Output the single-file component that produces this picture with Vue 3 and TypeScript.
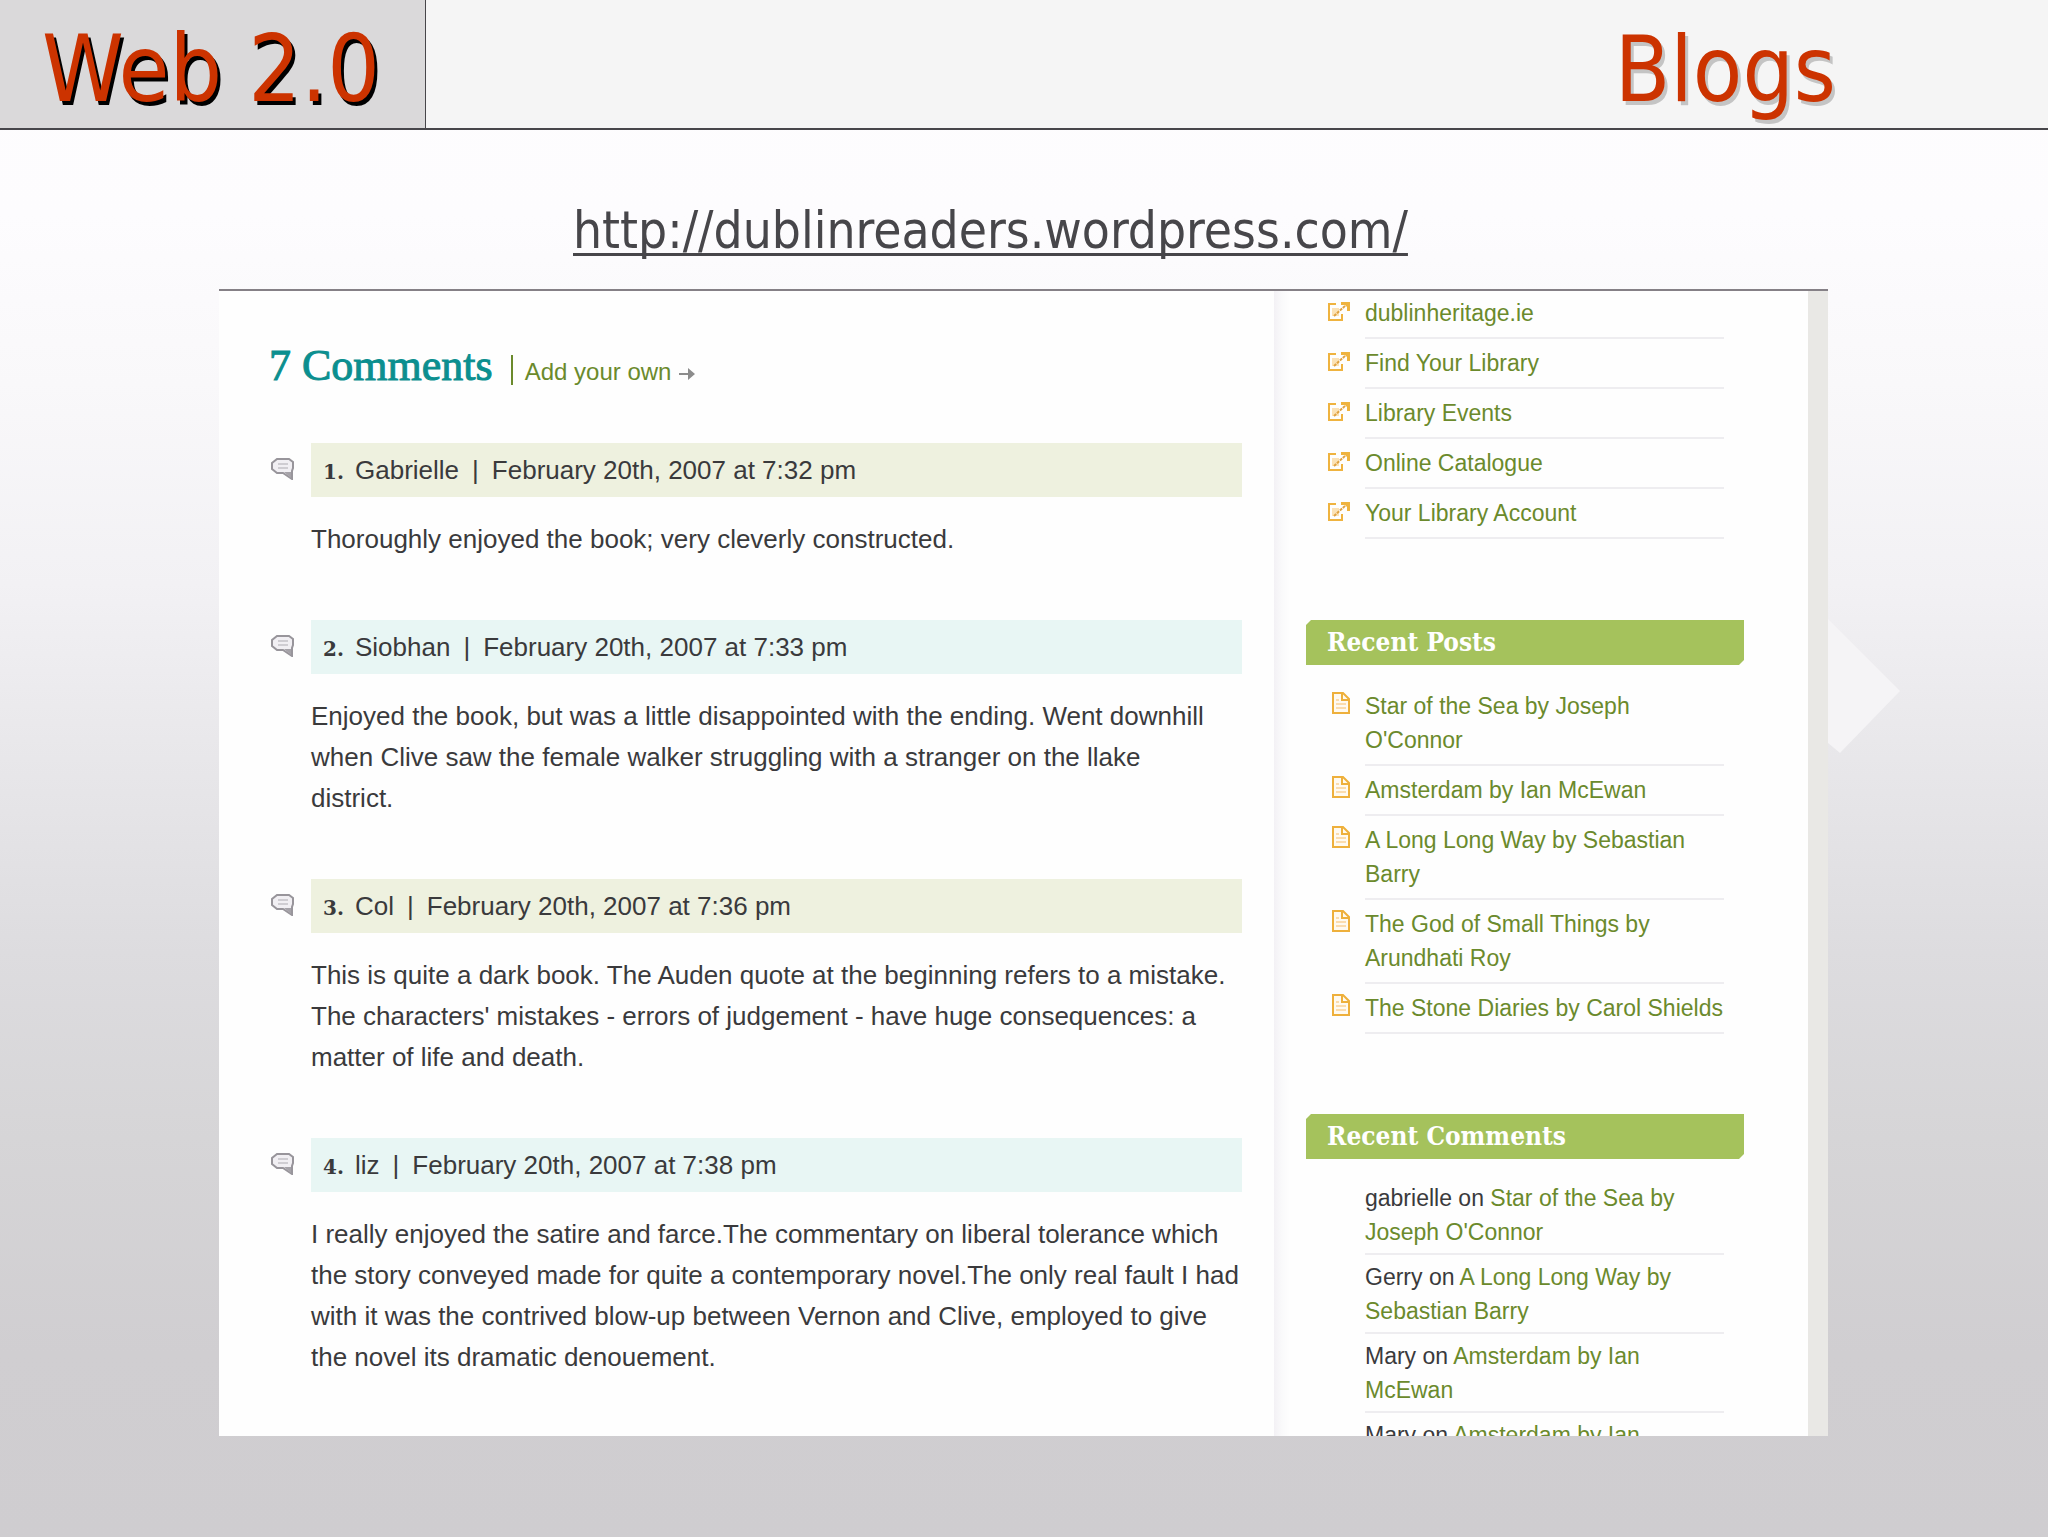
<script setup lang="ts">
interface Comment {
  id: number
  author: string
  date: string
  tone: 'olive' | 'aqua'
  body: string
}

const libraryLinks: string[] = [
  'dublinheritage.ie',
  'Find Your Library',
  'Library Events',
  'Online Catalogue',
  'Your Library Account',
]

const recentPosts: string[] = [
  "Star of the Sea by Joseph\nO'Connor",
  'Amsterdam by Ian McEwan',
  'A Long Long Way by Sebastian\nBarry',
  'The God of Small Things by\nArundhati Roy',
  'The Stone Diaries by Carol Shields',
]

const recentComments: { who: string; post: string }[] = [
  { who: 'gabrielle', post: "Star of the Sea by\nJoseph O'Connor" },
  { who: 'Gerry', post: 'A Long Long Way by\nSebastian Barry' },
  { who: 'Mary', post: 'Amsterdam by Ian\nMcEwan' },
  { who: 'Mary', post: 'Amsterdam by Ian\nMcEwan' },
]

const comments: Comment[] = [
  {
    id: 1,
    author: 'Gabrielle',
    date: 'February 20th, 2007 at 7:32 pm',
    tone: 'olive',
    body: 'Thoroughly enjoyed the book; very cleverly constructed.',
  },
  {
    id: 2,
    author: 'Siobhan',
    date: 'February 20th, 2007 at 7:33 pm',
    tone: 'aqua',
    body: 'Enjoyed the book, but was a little disappointed with the ending. Went downhill\nwhen Clive saw the female walker struggling with a stranger on the llake\ndistrict.',
  },
  {
    id: 3,
    author: 'Col',
    date: 'February 20th, 2007 at 7:36 pm',
    tone: 'olive',
    body: "This is quite a dark book. The Auden quote at the beginning refers to a mistake.\nThe characters' mistakes - errors of judgement - have huge consequences: a\nmatter of life and death.",
  },
  {
    id: 4,
    author: 'liz',
    date: 'February 20th, 2007 at 7:38 pm',
    tone: 'aqua',
    body: 'I really enjoyed the satire and farce.The commentary on liberal tolerance which\nthe story conveyed made for quite a contemporary novel.The only real fault I had\nwith it was the contrived blow-up between Vernon and Clive, employed to give\nthe novel its dramatic denouement.',
  },
]
</script>

<template>
  <div class="slide">
    <header class="top">
      <div class="brand">Web 2.0</div>
      <h1 class="title">Blogs</h1>
    </header>

    <main class="stage">
      <a class="url" href="http://dublinreaders.wordpress.com/">http://dublinreaders.wordpress.com/</a>

      <div class="frame">
        <svg class="diamond" viewBox="0 0 72 136" aria-hidden="true">
          <path d="M0 0L72 72L12 134L0 124Z" fill="#f5f4f6" />
        </svg>
        <div class="blog">
          <section class="thread">
            <div class="thread-head">
              <h2>7 Comments</h2>
              <span class="bar" aria-hidden="true"></span>
              <a href="#respond">Add your own</a>
              <svg class="arrow" viewBox="0 0 16 12" aria-hidden="true">
                <path d="M0 5H9V0L16 6L9 12V7H0Z" fill="#8c8c8c" />
              </svg>
            </div>

            <article v-for="c in comments" :key="c.id" class="comment">
              <svg class="bubble" viewBox="0 0 24 22" aria-hidden="true">
                <path
                  d="M6 1H18L22 4V10L21 13V21L12 15H6L1 11V5Z"
                  fill="#f1eff3"
                  stroke="#98959b"
                  stroke-width="2"
                />
                <path d="M13 14H20V20Z" fill="#a5a2a8" />
                <path d="M7 6H17M7 10H17" stroke="#cfcdd2" stroke-width="2" />
              </svg>
              <div class="comment-main">
                <div class="meta" :class="c.tone">
                  <b>{{ c.id }}.</b>
                  <span>{{ c.author }}</span>
                  <i>|</i>
                  <span>{{ c.date }}</span>
                </div>
                <p>{{ c.body }}</p>
              </div>
            </article>
          </section>

          <aside class="side">
            <ul class="links">
              <li v-for="l in libraryLinks" :key="l">
                <svg class="ic out" viewBox="0 0 23 20" aria-hidden="true">
                  <path d="M5 6H12V14H5Z" fill="#fbe2b6" />
                  <path d="M9 2H2V18H15V12" fill="none" stroke="#efb33f" stroke-width="2" />
                  <path d="M7 14L19 3" stroke="#e0a243" stroke-width="2" stroke-dasharray="3 1" />
                  <path d="M14 0H23V9H20V5L18 3H14Z" fill="#efb33f" />
                </svg>
                <a href="#">{{ l }}</a>
              </li>
            </ul>

            <h3>Recent Posts</h3>
            <ul class="posts">
              <li v-for="p in recentPosts" :key="p">
                <svg class="ic doc" viewBox="0 0 18 22" aria-hidden="true">
                  <path d="M1 1H11L17 7V21H1Z" fill="#fffaf0" stroke="#eeb03c" stroke-width="2" />
                  <path d="M10 1V8H17" fill="none" stroke="#eeb03c" stroke-width="2" />
                  <path d="M4 8H7M4 12H14M4 16H14" stroke="#fbdcae" stroke-width="2" />
                </svg>
                <a href="#">{{ p }}</a>
              </li>
            </ul>

            <h3>Recent Comments</h3>
            <ul class="replies">
              <li v-for="(r, i) in recentComments" :key="i">
                <span>{{ r.who }} on <a href="#">{{ r.post }}</a></span>
              </li>
            </ul>
          </aside>
          <div class="edge"></div>
        </div>
      </div>
    </main>
  </div>
</template>

<style>
body {
  margin: 0;
}
</style>

<style scoped>
.slide {
  height: 100vh;
  display: flex;
  flex-direction: column;
  overflow: hidden;
  font-family: 'Liberation Sans', Arial, sans-serif;
  color: #3a3a3c;
  background: linear-gradient(
    to bottom,
    #fefdfe 0%,
    #fdfcfe 14%,
    #f9f8fa 25%,
    #f2f1f4 38%,
    #eae9ec 47%,
    #dddcdf 62%,
    #d6d5d7 74%,
    #d0ced1 88%,
    #cfcdd0 100%
  );
}
.top {
  display: flex;
  height: 128px;
  border-bottom: 2px solid #47464a;
  background: #f5f5f5;
  font-family: 'DejaVu Sans Condensed', 'DejaVu Sans', Tahoma, sans-serif;
  font-stretch: condensed;
  font-size: 90px;
  line-height: 140px;
  color: #cc3300;
}
.brand {
  box-sizing: border-box;
  flex: 0 0 426px;
  padding-left: 42px;
  border-right: 1px solid #47464a;
  background: #dad9da;
  font-size: 92px;
  text-shadow: 3px 4px 0 #000;
}
.title {
  flex: 1;
  margin: 0;
  padding-right: 212px;
  font: inherit;
  text-align: right;
  text-shadow: 3px 4px 0 #c4c4c4;
}
.stage {
  flex: 1;
  min-height: 0;
  display: flex;
  flex-direction: column;
  padding: 64px 220px 101px 219px;
}
.url {
  align-self: flex-start;
  margin-left: 354px;
  font-family: 'DejaVu Sans Condensed', 'DejaVu Sans', Tahoma, sans-serif;
  font-stretch: condensed;
  font-size: 51px;
  line-height: 74px;
  color: #47464a;
  text-decoration-thickness: 3px;
  text-underline-offset: 5px;
  text-decoration-skip-ink: none;
}
.frame {
  position: relative;
  flex: 1;
  min-height: 0;
  margin-top: 21px;
}
.diamond {
  position: absolute;
  left: 100%;
  top: 330px;
  width: 72px;
  height: 136px;
}
.blog {
  box-sizing: border-box;
  height: 100%;
  display: flex;
  overflow: hidden;
  border-top: 2px solid #858086;
  background: #fefefe;
}
.thread {
  flex: 1;
  min-width: 0;
  padding: 49px 32px 0 50px;
}
.thread-head {
  display: flex;
  align-items: baseline;
  height: 103px;
  white-space: nowrap;
}
h2 {
  margin: 0;
  font-family: 'Liberation Serif', Georgia, serif;
  font-weight: 400;
  font-size: 44px;
  line-height: 52px;
  color: #0b8f8f;
  -webkit-text-stroke: 1px #0b8f8f;
}
.bar {
  align-self: flex-start;
  width: 2px;
  height: 30px;
  margin: 15px 12px 0 18px;
  background: #6b8a2c;
}
a {
  color: #6b8a2c;
  text-decoration: none;
}
.url {
  text-decoration-line: underline;
}
.thread-head a {
  font-size: 24px;
}
.arrow {
  width: 16px;
  height: 12px;
  margin-left: 8px;
}
.comment {
  display: flex;
}
.bubble {
  flex: none;
  width: 24px;
  height: 22px;
  margin: 15px 16px 0 2px;
}
.comment-main {
  flex: 1;
  min-width: 0;
}
.meta {
  display: flex;
  align-items: baseline;
  height: 54px;
  padding-left: 12px;
  font-size: 26px;
  line-height: 54px;
  white-space: nowrap;
}
.meta b {
  width: 32px;
  font-family: 'DejaVu Serif', Georgia, serif;
  font-size: 20px;
}
.meta i {
  font-style: normal;
  margin: 0 13px;
}
.olive {
  background: #eef1df;
}
.aqua {
  background: #e8f6f4;
}
p {
  margin: 22px 0 60px;
  font-size: 26px;
  line-height: 41px;
  white-space: pre;
}
.side {
  box-sizing: border-box;
  flex: 0 0 534px;
  padding: 0 64px 0 32px;
  background: linear-gradient(to right, #f3f1f5 0, #fafafb 8px, #fefefe 16px);
}
ul {
  list-style: none;
  margin: 0 20px 0 59px;
  padding: 0;
  font-size: 23px;
  line-height: 34px;
  white-space: pre;
}
li {
  position: relative;
  padding: 7px 0;
  border-bottom: 2px solid #eeedf0;
}
.links {
  margin-bottom: 81px;
}
.links li:first-child {
  padding-top: 5px;
}
.posts {
  margin-bottom: 80px;
}
.replies li {
  padding: 5px 0 4px;
}
.ic {
  position: absolute;
}
.out {
  left: -38px;
  bottom: 15px;
  width: 23px;
  height: 20px;
}
.doc {
  left: -33px;
  top: 10px;
  width: 18px;
  height: 22px;
}
h3 {
  margin: 0 0 17px;
  padding-left: 21px;
  font-family: 'DejaVu Serif Condensed', 'DejaVu Serif', Georgia, serif;
  font-stretch: condensed;
  font-size: 26px;
  line-height: 45px;
  font-weight: 700;
  color: #fff;
  background: #a5c25c;
  clip-path: polygon(5px 0, 100% 0, 100% calc(100% - 5px), calc(100% - 5px) 100%, 0 100%, 0 5px);
}
.edge {
  flex: 0 0 20px;
  background: #e9e8e5;
}
</style>
